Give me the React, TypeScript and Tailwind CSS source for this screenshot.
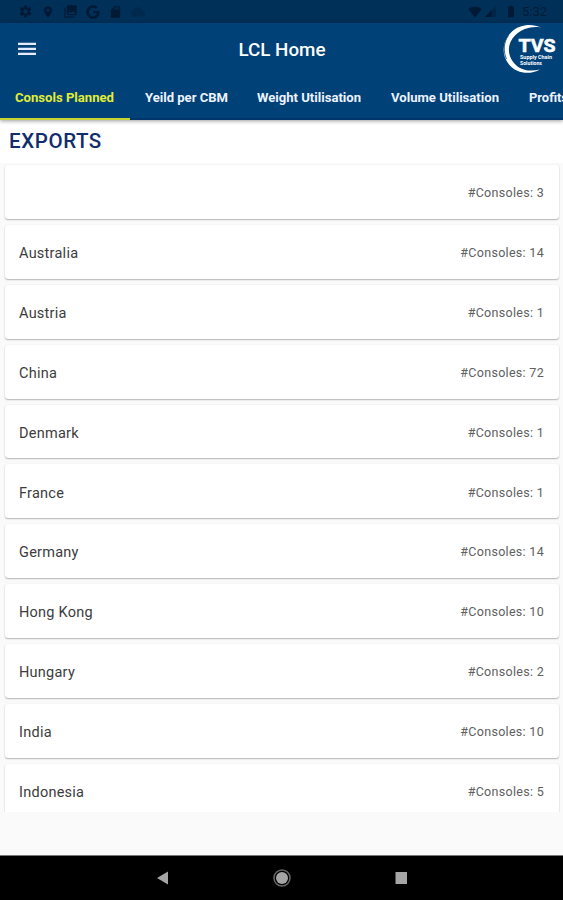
import {MdLocationOn, MdSdCard, MdBatteryFull, MdSignalWifi4Bar, MdPhotoLibrary, MdCloud, MdSettings} from "react-icons/md";
import {FaGoogle} from "react-icons/fa";

const tabs = [
    {label: "Consols Planned", width: "w-[130px]", textWidth: 99},
    {label: "Yeild per CBM", width: "w-[112px]", textWidth: 83},
    {label: "Weight Utilisation", width: "w-[134px]", textWidth: 104},
    {label: "Volume Utilisation", width: "w-[138px]", textWidth: 108},
    {label: "Profits", width: "w-[72px]", textWidth: 39},
];

const consoles = [
    {country: "", count: 3},
    {country: "Australia", count: 14},
    {country: "Austria", count: 1},
    {country: "China", count: 72},
    {country: "Denmark", count: 1},
    {country: "France", count: 1},
    {country: "Germany", count: 14},
    {country: "Hong Kong", count: 10},
    {country: "Hungary", count: 2},
    {country: "India", count: 10},
    {country: "Indonesia", count: 5},
];

function StatusBar() {
    return (
        <div className="flex h-[23px] shrink-0 items-center justify-between bg-[#003058] pl-[18px] pr-[16px] text-[#001a35]">
            <div className="flex items-center gap-[8px]">
                <MdSettings className="h-[15px] w-[15px]"/>
                <MdLocationOn className="h-[16px] w-[14px]"/>
                <MdPhotoLibrary className="h-[15px] w-[15px]"/>
                <FaGoogle className="h-[14px] w-[14px]"/>
                <MdSdCard className="h-[14px] w-[15px]"/>
                <MdCloud className="h-[14px] w-[14px] opacity-30"/>
            </div>
            <div className="flex items-center">
                <MdSignalWifi4Bar className="mr-[3px] h-[14px] w-[14px]"/>
                <svg viewBox="0 0 12 12" className="mr-[8px] h-[11px] w-[11px]" fill="currentColor">
                    <path d="M0 12 12 0v12z" opacity=".5"/>
                    <path d="M0 12 7 5v7z"/>
                </svg>
                <MdBatteryFull className="mr-[4px] h-[15px] w-[14px]"/>
                <span className="text-[13px] leading-none">5:32</span>
            </div>
        </div>
    );
}

function Logo() {
    return (
        <svg viewBox="0 0 58 50" className="h-[50px] w-[58px]" fill="#fff">
            {/* Crescent ring */}
            <path d="M39 3.500C30-.5 18 0 9.500 8 0 17-1 31 7 40.500 15 50 28 51 38 45.500 28 48 18 46.500 12 39 5 31 5 19.500 13 11.500 20 4.500 30 2 39 3.500z"/>
            <path d="M6.500 11.500C1.500 18 1 27.500 4.500 35" fill="none" stroke="#004178" strokeWidth=".8"/>
            <text x="16.500" y="28" fontSize="19" fontWeight="700" textLength="37" lengthAdjust="spacingAndGlyphs" stroke="#fff" strokeWidth=".6">TVS</text>
            <text x="18" y="34.800" fontSize="5.500" fontWeight="700" textLength="32" lengthAdjust="spacingAndGlyphs">Supply Chain</text>
            <text x="18" y="40.500" fontSize="5.500" fontWeight="700" textLength="22" lengthAdjust="spacingAndGlyphs">Solutions</text>
        </svg>
    );
}

export default function App() {
    return (
        <div className="flex h-[900px] w-[563px] flex-col overflow-hidden bg-[#fafafa] font-['Roboto',sans-serif]">
            <StatusBar/>

            {/* App bar */}
            <header className="z-10 h-[97px] shrink-0 bg-[#004178] text-white shadow-[0_1px_4px_rgba(0,0,0,0.4)]">
                <div className="grid h-[52px] grid-cols-[1fr_auto_1fr] items-center pl-[18px] pr-[3px]">
                    <svg viewBox="0 0 18 14" className="h-[14px] w-[18px]" fill="#e6ecff">
                        <path d="M0 .7h18v2.300H0zM0 5.700h18v2.300H0zM0 10.700h18v2.300H0z"/>
                    </svg>
                    <h1 className="-ml-[15px] text-[18.500px] font-medium">
                        <svg viewBox="0 0 88 24" className="h-[24px] w-[88px]" fill="currentColor">
                            <text x="0.500" y="18.500" textLength="87" lengthAdjust="spacingAndGlyphs">LCL Home</text>
                        </svg>
                    </h1>
                    <div className="flex justify-end"><Logo/></div>
                </div>
                <nav className="flex h-[45px] overflow-hidden">
                    {tabs.map((tab, i) => (
                        <button
                            key={tab.label}
                            className={`${tab.width} h-[45px] shrink-0 border-b-2 pl-[15px] pt-[3px] text-left text-[12.500px] font-bold ${i === 0 ? "border-[#c5d52f] text-[#e0ee35]" : "border-[#00356c] text-[#edf3ff]"}`}
                        >
                            <svg width={tab.textWidth} height="18" fill="currentColor" className="block">
                                <text x="0" y="13" textLength={tab.textWidth} lengthAdjust="spacingAndGlyphs">{tab.label}</text>
                            </svg>
                        </button>
                    ))}
                </nav>
            </header>

            {/* Exports list */}
            <main className="flex h-[692px] shrink-0 flex-col overflow-hidden">
                <h2 className="h-[43px] shrink-0 bg-white pl-[9px] pt-[7px] text-[20.500px] font-medium leading-[28px] tracking-[0.600px] text-[#122d6c]">EXPORTS</h2>
                <ul className="flex flex-col gap-[6px] overflow-hidden px-[4.500px] pt-[2px]">
                    {consoles.map((item) => (
                        <li
                            key={item.country}
                            className="flex h-[53.900px] shrink-0 items-center justify-between rounded-[3px] bg-white pl-[14.500px] pr-[14.500px] pt-[3px] shadow-[0_1px_1.5px_rgba(0,0,0,0.27),0_0_2px_rgba(0,0,0,0.06)]"
                        >
                            <span className="pt-px text-[14.500px] tracking-[0.250px] text-[#3c3c3c]">{item.country}</span>
                            <span className="text-[12.500px] tracking-[0.300px] text-[#606060]">#Consoles: {item.count}</span>
                        </li>
                    ))}
                </ul>
            </main>
            <div className="grow"/>

            {/* Android navigation */}
            <footer className="flex h-[45px] shrink-0 items-center justify-center border-t border-[#777] bg-black text-[#a5a5a5]">
                <svg viewBox="0 0 250 20" className="h-[20px] w-[250px]" fill="currentColor">
                    <path d="M0 10 11 3.500v13z"/>
                    <circle cx="125" cy="10" r="8" fill="none" stroke="#666" strokeWidth="1.500"/>
                    <circle cx="125" cy="10" r="6"/>
                    <path d="M238.500 4h12v12h-12z"/>
                </svg>
            </footer>
        </div>
    );
}
